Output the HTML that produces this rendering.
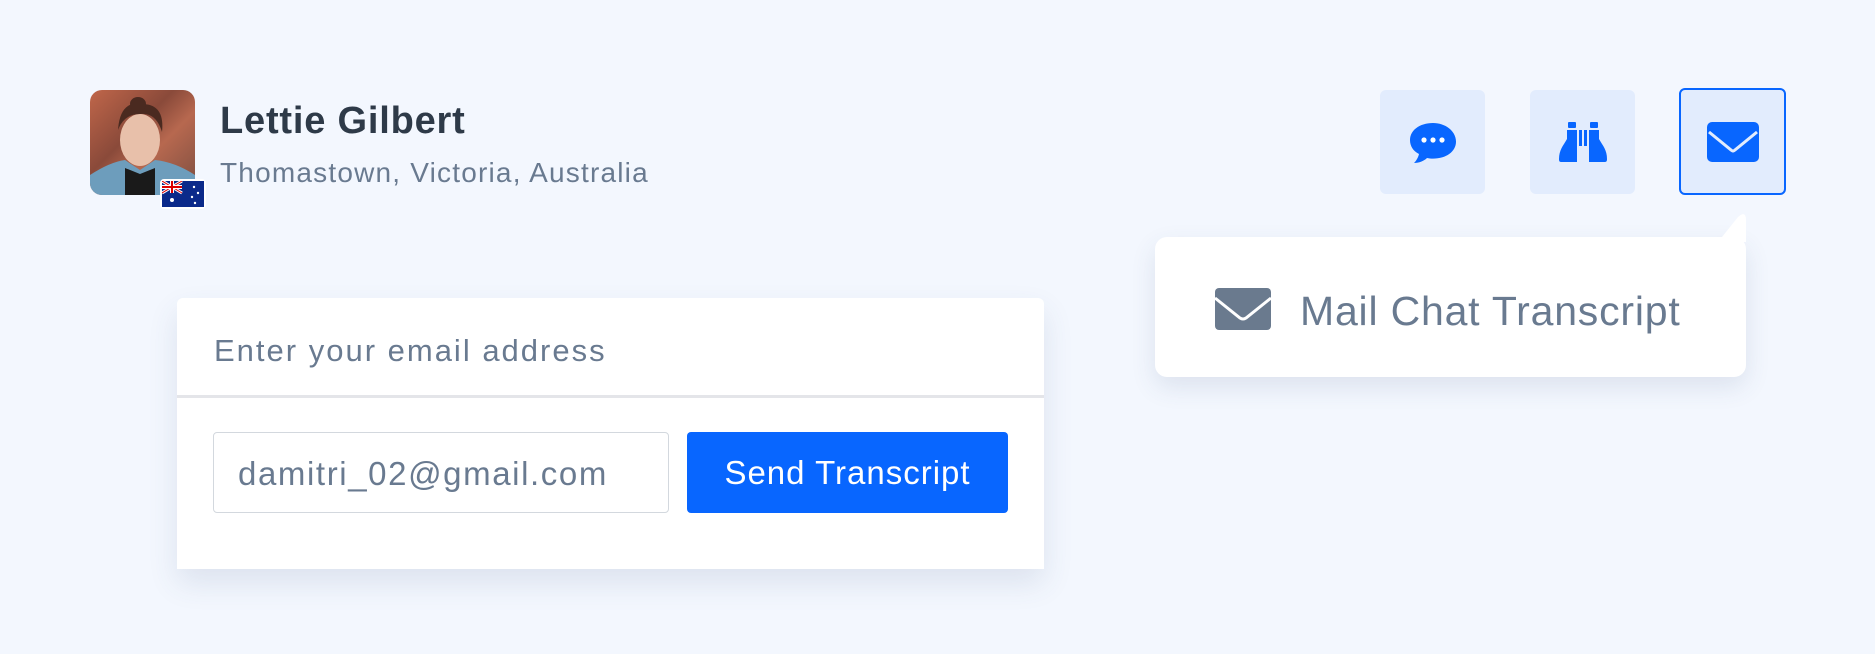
<!DOCTYPE html>
<html><head><meta charset="utf-8"><style>
*{margin:0;padding:0;box-sizing:border-box}
body{width:1875px;height:654px;background:#f3f7fe;font-family:"Liberation Sans",sans-serif;position:relative;overflow:hidden}
.abs{position:absolute}
.avatar{left:90px;top:90px;width:105px;height:105px;border-radius:12px;overflow:hidden;background:linear-gradient(135deg,#c0664a,#8a4a3a 40%,#b7684f 60%,#7a4d40)}
.flag{left:160px;top:179px;width:46px;height:30px;border-radius:4px;background:#fff;padding:2px}
.name{left:220px;top:100px;font-size:38px;font-weight:bold;color:#2e3a48;letter-spacing:0.8px}
.loc{left:220px;top:157px;font-size:28px;color:#697a90;letter-spacing:1.2px}
.btn{top:90px;width:105px;height:104px;background:#e2ecfd;border-radius:6px;display:flex;align-items:center;justify-content:center}
.pop{left:1155px;top:237px;width:591px;height:140px;background:#fff;border-radius:12px;box-shadow:0 10px 25px rgba(60,80,120,.12)}
.card{left:177px;top:298px;width:867px;height:271px;background:#fff;border-radius:6px 6px 0 0;box-shadow:0 14px 30px rgba(60,80,120,.12)}
</style></head><body>
<div class="abs avatar">
<svg width="105" height="105"><ellipse cx="50" cy="50" rx="20" ry="26" fill="#e8c0aa"/><path d="M28 40 Q30 10 52 14 Q75 14 72 42 Q66 22 50 24 Q34 24 28 40Z" fill="#4a2a20"/><ellipse cx="48" cy="14" rx="8" ry="7" fill="#4a2a20"/><path d="M0 105 L0 85 Q20 72 35 70 L50 80 L65 70 Q85 72 105 85 L105 105Z" fill="#6d9dbc"/><path d="M35 78 L50 84 L65 78 L65 105 L35 105Z" fill="#1a1a1a"/></svg>
</div>
<div class="abs flag"><svg width="42" height="26" viewBox="0 0 42 26"><rect width="42" height="26" fill="#0b2a8a"/><path d="M0 0L20 12M20 0L0 12" stroke="#fff" stroke-width="3"/><path d="M0 0L20 12M20 0L0 12" stroke="#d00" stroke-width="1"/><path d="M10 0V12M0 6H20" stroke="#fff" stroke-width="4"/><path d="M10 0V12M0 6H20" stroke="#d00" stroke-width="2"/><circle cx="10" cy="19" r="2" fill="#fff"/><circle cx="32" cy="6" r="1.2" fill="#fff"/><circle cx="36" cy="12" r="1.2" fill="#fff"/><circle cx="30" cy="16" r="1.2" fill="#fff"/><circle cx="33" cy="22" r="1.2" fill="#fff"/></svg></div>
<div class="abs name">Lettie Gilbert</div>
<div class="abs loc">Thomastown, Victoria, Australia</div>

<div class="abs btn" style="left:1380px"><svg width="52" height="46" viewBox="0 0 52 46"><path d="M26 4C13 4 3 11 3 21c0 6 3 11 9 14-1 4-3 7-5 9 5 0 10-2 13-5 2 .5 4 .6 6 .6 13 0 23-7 23-17S39 4 26 4Z" fill="#0866ff"/><circle cx="17" cy="21" r="2.6" fill="#fff"/><circle cx="26" cy="21" r="2.6" fill="#fff"/><circle cx="35" cy="21" r="2.6" fill="#fff"/></svg></div>
<div class="abs btn" style="left:1530px"><svg width="50" height="44" viewBox="0 0 50 44"><rect x="10" y="2" width="8" height="6" rx="1" fill="#0866ff"/><rect x="32" y="2" width="8" height="6" rx="1" fill="#0866ff"/><path d="M9 10h10v32H3c-2 0-2-2-2-3 0-9 4-13 8-20Z" fill="#0866ff"/><path d="M41 10H31v32h16c2 0 2-2 2-3 0-9-4-13-8-20Z" fill="#0866ff"/><rect x="21" y="10" width="3" height="16" fill="#0866ff"/><rect x="26" y="10" width="3" height="16" fill="#0866ff"/></svg></div>
<div class="abs btn" style="left:1679px;top:88px;width:107px;height:107px;border:2.5px solid #0866ff"><svg width="52" height="40" viewBox="0 0 52 40"><rect x="0" y="0" width="52" height="40" rx="5" fill="#0866ff"/><path d="M2 10 L24 28 Q26 30 28 28 L50 10" stroke="#e2ecfd" stroke-width="3" fill="none"/></svg></div>

<div class="abs pop"></div>
<svg class="abs" style="left:1700px;top:212px" width="46" height="30"><path d="M18 30 L38 5 Q46 -2 46 8 L46 30Z" fill="#fff"/></svg>
<svg class="abs" style="left:1215px;top:288px" width="56" height="42" viewBox="0 0 56 42"><rect width="56" height="42" rx="4" fill="#6a7a8e"/><path d="M0 10 L25 30 Q28 32 31 30 L56 10" stroke="#fff" stroke-width="3" fill="none"/></svg>
<div class="abs" style="left:1300px;top:288px;font-size:41px;color:#697a90;letter-spacing:0.8px">Mail Chat Transcript</div>

<div class="abs card">
<div class="abs" style="left:37px;top:35px;font-size:31px;color:#697a90;letter-spacing:2px">Enter your email address</div>
<div class="abs" style="left:0;top:97px;width:867px;height:3px;background:#e4e5e9"></div>
<div class="abs" style="left:36px;top:134px;width:456px;height:81px;border:1.5px solid #d3d8de;border-radius:4px"></div>
<div class="abs" style="left:61px;top:157px;font-size:33px;color:#697a90;letter-spacing:1.6px">damitri_02@gmail.com</div>
<div class="abs" style="left:510px;top:134px;width:321px;height:81px;background:#0866ff;border-radius:4px;color:#fff;font-size:33px;letter-spacing:1px;display:flex;align-items:center;justify-content:center">Send Transcript</div>
</div>
</body></html>
